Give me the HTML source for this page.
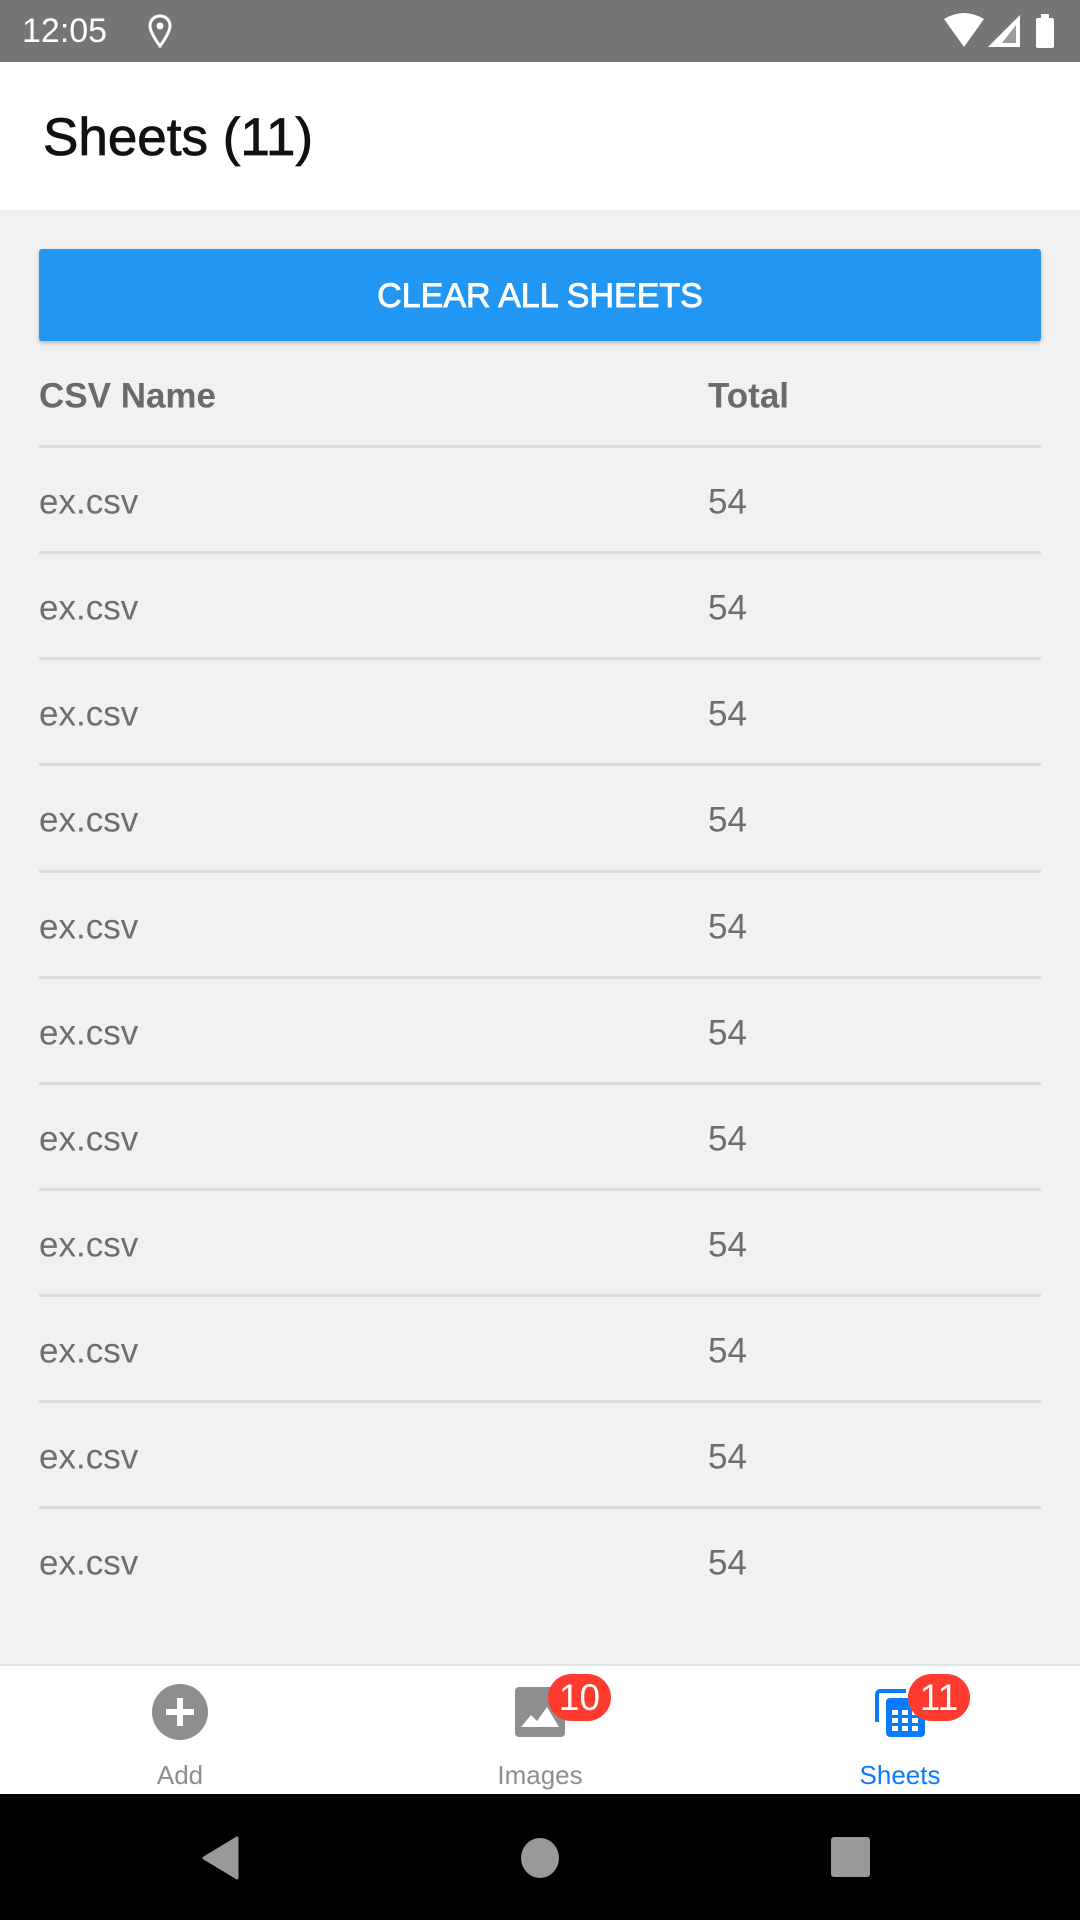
<!DOCTYPE html>
<html><head><meta charset="utf-8"><style>
*{margin:0;padding:0;box-sizing:border-box}
body{width:1080px;height:1920px;overflow:hidden;background:#f1f1f1;font-family:"Liberation Sans",Roboto,sans-serif;position:relative}
.status{position:absolute;top:0;left:0;width:1080px;height:62px;background:#757575;color:#fff}
.status .t{position:absolute;left:22px;top:12px;font-size:34px}
.header{position:absolute;top:62px;left:0;width:1080px;height:148px;background:#fff}
.header h1{position:absolute;left:43px;top:45px;font-size:53px;font-weight:400;color:#111;-webkit-text-stroke:0.8px #111}
.btn{position:absolute;left:39px;top:249px;width:1002px;height:92px;background:#2196f3;border-radius:3px;box-shadow:0 2px 4px rgba(0,0,0,.25);color:#fff;font-size:34px;text-align:center;line-height:94px;font-weight:500;-webkit-text-stroke:0.9px #fff}
.row{position:absolute;left:39px;width:1002px;height:106px;color:#6e6e6e;font-size:35px}
.row span{position:absolute;top:50%;transform:translateY(-46%)}
.row .b{left:669px}
.hd{font-weight:700;font-size:35px;color:#6a6a6a}
.div{position:absolute;left:39px;width:1002px;height:3px;background:#dcdcdc}
.nav{position:absolute;top:1664px;left:0;width:1080px;height:130px;background:#fff;border-top:2px solid #e2e2e2}
.lbl{position:absolute;top:1760px;font-size:26px;color:#8e8e8e;width:200px;text-align:center}
.badge{position:absolute;height:47px;border-radius:24px;background:#ff3b30;color:#fff;font-size:37px;text-align:center;line-height:48px}
.sys{position:absolute;top:1794px;left:0;width:1080px;height:126px;background:#000}
</style></head><body>
<div class="status"><span class="t">12:05</span>
<svg style="position:absolute;left:148px;top:14px" width="24" height="34" viewBox="0 0 24 34"><path d="M12 2C6 2 2 6.5 2 12c0 7 10 20 10 20s10-13 10-20C22 6.5 18 2 12 2z" fill="none" stroke="#fff" stroke-width="3"/><circle cx="12" cy="12" r="3.5" fill="#fff"/></svg>
<svg style="position:absolute;left:944px;top:13px" width="122" height="36" viewBox="0 0 122 36"><path d="M0 6 Q20 -6 40 6 L20 34Z" fill="#fff"/><path d="M76 2 L76 34 L44 34Z" fill="#fff"/><path d="M72 12 L72 30 L58 30Z" fill="#9a9a9a"/><rect x="92" y="5" width="18" height="30" rx="2" fill="#fff"/><rect x="97" y="1" width="8" height="5" fill="#fff"/></svg>
</div>
<div class="header"><h1>Sheets (11)</h1></div>
<div class="btn">CLEAR ALL SHEETS</div>
<div class="row hd" style="top:342px"><span>CSV Name</span><span class="b">Total</span></div>
<div class="div" style="top:445px"></div>
<div class="row" style="top:448px"><span>ex.csv</span><span class="b">54</span></div>
<div class="div" style="top:551px"></div>
<div class="row" style="top:554px"><span>ex.csv</span><span class="b">54</span></div>
<div class="div" style="top:657px"></div>
<div class="row" style="top:660px"><span>ex.csv</span><span class="b">54</span></div>
<div class="div" style="top:763px"></div>
<div class="row" style="top:766px"><span>ex.csv</span><span class="b">54</span></div>
<div class="div" style="top:870px"></div>
<div class="row" style="top:873px"><span>ex.csv</span><span class="b">54</span></div>
<div class="div" style="top:976px"></div>
<div class="row" style="top:979px"><span>ex.csv</span><span class="b">54</span></div>
<div class="div" style="top:1082px"></div>
<div class="row" style="top:1085px"><span>ex.csv</span><span class="b">54</span></div>
<div class="div" style="top:1188px"></div>
<div class="row" style="top:1191px"><span>ex.csv</span><span class="b">54</span></div>
<div class="div" style="top:1294px"></div>
<div class="row" style="top:1297px"><span>ex.csv</span><span class="b">54</span></div>
<div class="div" style="top:1400px"></div>
<div class="row" style="top:1403px"><span>ex.csv</span><span class="b">54</span></div>
<div class="div" style="top:1506px"></div>
<div class="row" style="top:1509px"><span>ex.csv</span><span class="b">54</span></div>

<div class="nav"></div>
<svg style="position:absolute;left:152px;top:1684px" width="56" height="56" viewBox="0 0 56 56"><circle cx="28" cy="28" r="28" fill="#8e8e8e"/><rect x="25" y="14" width="6" height="28" fill="#fff"/><rect x="14" y="25" width="28" height="6" fill="#fff"/></svg>
<div class="lbl" style="left:80px">Add</div>
<svg style="position:absolute;left:515px;top:1687px" width="50" height="50" viewBox="0 0 50 50"><rect width="50" height="50" rx="4" fill="#8e8e8e"/><path d="M6 40 L16 28 L22 34 L32 20 L44 40Z" fill="#fff"/></svg>
<div class="badge" style="left:548px;top:1674px;width:63px">10</div>
<div class="lbl" style="left:440px">Images</div>
<svg style="position:absolute;left:874px;top:1688px" width="52" height="50" viewBox="0 0 52 50"><path d="M3 34 V6 a3 3 0 0 1 3-3 H32" fill="none" stroke="#0a7aff" stroke-width="4"/><rect x="12" y="10" width="39" height="39" rx="4" fill="#0a7aff"/><g fill="#fff"><rect x="18" y="22" width="6" height="5"/><rect x="28" y="22" width="6" height="5"/><rect x="38" y="22" width="6" height="5"/><rect x="18" y="30" width="6" height="5"/><rect x="28" y="30" width="6" height="5"/><rect x="38" y="30" width="6" height="5"/><rect x="18" y="38" width="6" height="5"/><rect x="28" y="38" width="6" height="5"/><rect x="38" y="38" width="6" height="5"/></g></svg>
<div class="badge" style="left:908px;top:1674px;width:62px">11</div>
<div class="lbl" style="left:800px;color:#0a7aff">Sheets</div>

<div class="sys">
<svg style="position:absolute;left:200px;top:42px" width="40" height="44" viewBox="0 0 40 44"><path d="M37 2 L37 42 L4 22Z" fill="#999" stroke="#999" stroke-width="3" stroke-linejoin="round"/></svg>
<div style="position:absolute;left:521px;top:44px;width:38px;height:40px;border-radius:50%;background:#999"></div>
<div style="position:absolute;left:831px;top:43px;width:39px;height:40px;border-radius:3px;background:#999"></div>
</div>
</body></html>
